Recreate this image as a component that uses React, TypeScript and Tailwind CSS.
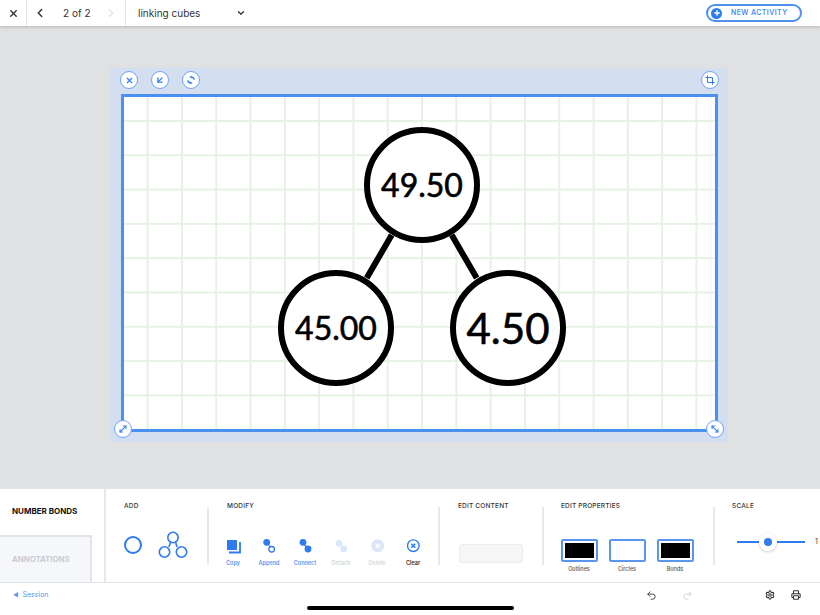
import { X, ChevronLeft, ChevronRight, ChevronDown, Plus, Crop, ArrowDownLeft, MoveDiagonal, MoveDiagonal2, Undo2, Redo2, Settings, Printer } from 'lucide-react';
import type { ReactNode } from 'react';

const font = { fontFamily: 'Inter, "Liberation Sans", sans-serif' };

function RoundButton({ children, className = '' }: { children: ReactNode; className?: string }) {
  return (
    <button className={`w-[18px] h-[18px] rounded-full bg-white border border-[#6ea4f2] flex items-center justify-center text-[#2f7bf0] ${className}`}>
      {children}
    </button>
  );
}

function Node({ value, className }: { value: string; className: string }) {
  return (
    <div
      className={`absolute w-[116px] h-[116px] rounded-full bg-white border-[6px] border-black flex items-center justify-center text-black [-webkit-text-stroke:0.6px_black] ${className}`}
      style={{ fontFamily: 'Lato, sans-serif' }}
    >
      {value}
    </div>
  );
}

function Tool({ label, color, icon }: { label: string; color: string; icon: ReactNode }) {
  return (
    <div className="w-9 flex flex-col items-center">
      <svg width="16" height="16" viewBox="0 0 16 16">{icon}</svg>
      <span className={`mt-[5px] text-[5.5px] font-semibold leading-[8px] ${color}`}>{label}</span>
    </div>
  );
}

function Swatch({ label, fill }: { label: string; fill: string }) {
  return (
    <div className="w-9 flex flex-col items-center">
      <div className="w-[37px] h-[23px] shrink-0 rounded-[2px] border-2 border-[#5b96ee] bg-white p-[2px]">
        <div className={`w-full h-full ${fill}`} />
      </div>
      <span className="mt-[3px] text-[5.5px] font-medium leading-[8px] text-[#555] whitespace-nowrap">{label}</span>
    </div>
  );
}

function Divider() {
  return <div className="w-[2px] h-[58px] mt-[18px] bg-[#e6e8ec] shrink-0" />;
}

function Heading({ children }: { children: ReactNode }) {
  return <div className="text-[6.5px] font-medium leading-[8px] tracking-[0.2px] text-[#333] whitespace-nowrap">{children}</div>;
}

export default function App() {
  return (
    <div className="relative w-[820px] h-[615px] overflow-hidden flex flex-col bg-white" style={font}>
      {/* Top bar */}
      <header className="relative z-10 h-[26px] shrink-0 bg-white flex items-center shadow-[0_1px_3px_rgba(0,0,0,0.2)]">
        <div className="w-[27px] h-full border-r border-[#e4e5e7] flex items-center justify-center">
          <X className="w-[11px] h-[11px] text-[#333]" strokeWidth={3} />
        </div>
        <div className="w-[99px] h-full border-r border-[#e4e5e7] flex items-center">
          <ChevronLeft className="ml-[6px] w-[14px] h-[14px] text-[#333]" strokeWidth={2.5} />
          <span className="ml-[16px] w-[25px] text-[10px] text-[#333] whitespace-nowrap">2 of 2</span>
          <ChevronRight className="ml-[16px] w-[14px] h-[14px] text-[#e2e2e2]" strokeWidth={2} />
        </div>
        <div className="flex items-center pl-3">
          <span className="w-[98px] text-[10px] text-[#333] whitespace-nowrap">linking cubes</span>
          <ChevronDown className="w-[10px] h-[10px] text-[#333]" strokeWidth={3} />
        </div>
        <button className="ml-auto mr-[18px] w-[96px] h-[18px] rounded-full border-2 border-[#4f90ee] flex items-center pl-[3px]">
          <span className="w-[11px] h-[11px] rounded-full bg-[#2f7bf0] flex items-center justify-center">
            <Plus className="w-[8px] h-[8px] text-white" strokeWidth={4} />
          </span>
          <span className="ml-[9px] text-[7px] font-semibold tracking-[0.4px] text-[#4f8eec] whitespace-nowrap">NEW ACTIVITY</span>
        </button>
      </header>

      {/* Work area */}
      <main className="flex-1 bg-[#e0e1e3] pl-[110px] pt-[42px]">
        <div className="relative w-[618px] h-[374px] bg-[#d3dff0] pl-[11px]">
          <div className="h-[26px] flex items-start pt-[3px]">
            <div className="-ml-px flex gap-[13px]">
              <RoundButton><X className="w-[9px] h-[9px]" strokeWidth={3} /></RoundButton>
              <RoundButton><ArrowDownLeft className="w-[10px] h-[10px]" strokeWidth={3} /></RoundButton>
              <RoundButton>
                <svg width="10" height="10" viewBox="0 0 10 10" fill="none" stroke="currentColor" strokeWidth="1.6">
                  <path d="M5.5 2 A3.2 3.2 0 0 1 8.2 4.6" />
                  <path d="M4.5 8 A3.2 3.2 0 0 1 1.8 5.4" />
                  <path d="M3.4 2 L5.6 0.6 L5.6 3.4 Z" fill="currentColor" stroke="none" />
                  <path d="M6.6 8 L4.4 9.4 L4.4 6.6 Z" fill="currentColor" stroke="none" />
                </svg>
              </RoundButton>
            </div>
            <RoundButton className="ml-auto mr-[9px]"><Crop className="w-[10px] h-[10px]" strokeWidth={2.5} /></RoundButton>
          </div>

          <div className="relative w-[597px] h-[338px] border-[3px] border-[#4a90ee] bg-white bg-[linear-gradient(to_right,#e6f2e3_2px,transparent_2px),linear-gradient(to_bottom,#e6f2e3_2px,transparent_2px)] bg-[size:34.3px_34.3px] bg-[position:22.7px_23px]">
            <svg className="absolute inset-0 w-full h-full" fill="none" stroke="black" strokeWidth="6">
              <line x1="267.7" y1="138" x2="242.7" y2="181" />
              <line x1="327.7" y1="138" x2="352.7" y2="181" />
            </svg>
            <Node value="49.50" className="left-[240px] top-[30px] text-[32px]" />
            <Node value="45.00" className="left-[154px] top-[173px] text-[32px]" />
            <Node value="4.50" className="left-[326px] top-[173px] text-[42px]" />
            <RoundButton className="absolute -left-[10px] top-[323px]"><MoveDiagonal className="w-[10px] h-[10px]" strokeWidth={2.5} /></RoundButton>
            <RoundButton className="absolute left-[582px] top-[323px]"><MoveDiagonal2 className="w-[10px] h-[10px]" strokeWidth={2.5} /></RoundButton>
          </div>
        </div>
      </main>

      {/* Tool panel */}
      <section className="h-[95px] shrink-0 bg-white border-t border-[#e2e3e6] border-b flex">
        <div className="w-[106px] shrink-0 border-r-2 border-[#e6e8ec] flex flex-col">
          <div className="h-[46px] pl-3 pt-[17px] text-[8px] font-bold leading-[10px] text-[#111] whitespace-nowrap">NUMBER BONDS</div>
          <div className="w-[92px] flex-1 bg-[#f6f7fb] border-t-2 border-r-2 border-[#e2e4e8] pl-3 pt-[17px] text-[7.8px] font-bold leading-[10px] text-[#c9cbd0] whitespace-nowrap">ANNOTATIONS</div>
        </div>

        <div className="w-[101px] shrink-0 pl-[18px] pt-[13px]">
          <Heading>ADD</Heading>
          <div className="flex items-start mt-[21px] -ml-px">
            <svg width="20" height="20" viewBox="0 0 20 20" className="mt-[4px]" fill="none" stroke="#2f7bf0" strokeWidth="2">
              <circle cx="10" cy="10" r="8" />
            </svg>
            <svg width="34" height="28" viewBox="0 0 34 28" className="ml-[13px]" fill="none" stroke="#2f7bf0" strokeWidth="1.6">
              <circle cx="17" cy="6.5" r="5.2" />
              <circle cx="8.5" cy="21" r="5.2" />
              <circle cx="25.5" cy="21" r="5.2" />
              <line x1="14.5" y1="11" x2="13" y2="16" />
              <line x1="19.5" y1="11" x2="21" y2="16" />
            </svg>
          </div>
        </div>
        <Divider />

        <div className="w-[229px] shrink-0 pl-[18px] pt-[13px]">
          <Heading>MODIFY</Heading>
          <div className="flex -ml-3 mt-[28px]">
            <Tool label="Copy" color="text-[#5b96ee]" icon={<>
              <path d="M4 14.5 H15 V4" fill="none" stroke="#2f7bf0" strokeWidth="1.8" />
              <rect x="2" y="2" width="10" height="10" fill="#2f7bf0" />
            </>} />
            <Tool label="Append" color="text-[#5b96ee]" icon={<>
              <circle cx="5.7" cy="4.3" r="3.4" fill="#2f7bf0" />
              <line x1="6" y1="5" x2="10" y2="10" stroke="#2f7bf0" strokeWidth="1.2" />
              <circle cx="10.7" cy="11.3" r="2.8" fill="white" stroke="#2f7bf0" strokeWidth="1.3" />
            </>} />
            <Tool label="Connect" color="text-[#5b96ee]" icon={<>
              <circle cx="6" cy="4.3" r="3.4" fill="#2f7bf0" />
              <line x1="6" y1="5" x2="11" y2="11" stroke="#2f7bf0" strokeWidth="1.2" />
              <circle cx="11" cy="11" r="3.4" fill="#2f7bf0" />
            </>} />
            <Tool label="Detach" color="text-[#d5d7dc]" icon={<>
              <circle cx="6" cy="5.3" r="3.4" fill="#dbe7f9" />
              <circle cx="10.7" cy="11" r="3.4" fill="#dbe7f9" />
            </>} />
            <Tool label="Delete" color="text-[#d5d7dc]" icon={<>
              <circle cx="8.7" cy="7.7" r="6.5" fill="#dbe7f9" />
              <path d="M6.7 5.7 L10.7 9.7 M10.7 5.7 L6.7 9.7" stroke="white" strokeWidth="1.5" />
            </>} />
            <Tool label="Clear" color="text-[#333]" icon={<>
              <circle cx="8.3" cy="7.7" r="5.8" fill="none" stroke="#2f7bf0" strokeWidth="1.4" />
              <path d="M6.3 5.7 L10.3 9.7 M10.3 5.7 L6.3 9.7" stroke="#2f7bf0" strokeWidth="1.6" />
            </>} />
          </div>
        </div>
        <Divider />

        <div className="w-[102px] shrink-0 pl-[18px] pt-[13px]">
          <Heading>EDIT CONTENT</Heading>
          <div className="mt-[34px] w-[64px] h-[19px] ml-px rounded-[3px] bg-[#f6f6f7] border border-[#ececee]" />
        </div>
        <Divider />

        <div className="w-[169px] shrink-0 pl-[17px] pt-[13px]">
          <Heading>EDIT PROPERTIES</Heading>
          <div className="flex gap-[12px] mt-[29px]">
            <Swatch label="Outlines" fill="bg-black" />
            <Swatch label="Circles" fill="bg-white" />
            <Swatch label="Bonds" fill="bg-black" />
          </div>
        </div>
        <Divider />

        <div className="flex-1 min-w-0 pl-[17px] pt-[13px] overflow-hidden">
          <Heading>SCALE</Heading>
          <div className="flex items-center mt-[27px] ml-[5px]">
            <div className="relative w-[68px] h-[2px] bg-[#2f7bf0]">
              <div className="absolute left-[22px] -top-[8px] w-[18px] h-[18px] rounded-full bg-white shadow-[0_1px_3px_rgba(0,0,0,0.2)] flex items-center justify-center">
                <div className="w-[8px] h-[8px] rounded-full bg-[#2f7bf0]" />
              </div>
            </div>
            <span className="ml-[10px] text-[7px] text-[#333]">1</span>
          </div>
        </div>
      </section>

      {/* Footer */}
      <footer className="h-[32px] shrink-0 bg-white flex items-start pt-[6px]">
        <div className="ml-[13px] mt-px flex items-center text-[#5b96ee]">
          <span className="text-[6px] leading-[10px]">◄</span>
          <span className="ml-[4px] text-[7px] leading-[10px]">Session</span>
        </div>
        <Undo2 className="ml-[597px] mt-px w-[11px] h-[11px] text-[#333]" strokeWidth={2} />
        <Redo2 className="ml-[25px] mt-px w-[11px] h-[11px] text-[#d0d2d6]" strokeWidth={2} />
        <Settings className="ml-[72px] mt-px w-[10px] h-[10px] text-[#333]" strokeWidth={2.5} />
        <Printer className="ml-[16px] mt-px w-[10px] h-[10px] text-[#333]" strokeWidth={2.5} />
      </footer>

      {/* Home indicator */}
      <div className="absolute left-[307px] top-[606px] w-[207px] h-[4px] rounded-full bg-black" />
    </div>
  );
}
